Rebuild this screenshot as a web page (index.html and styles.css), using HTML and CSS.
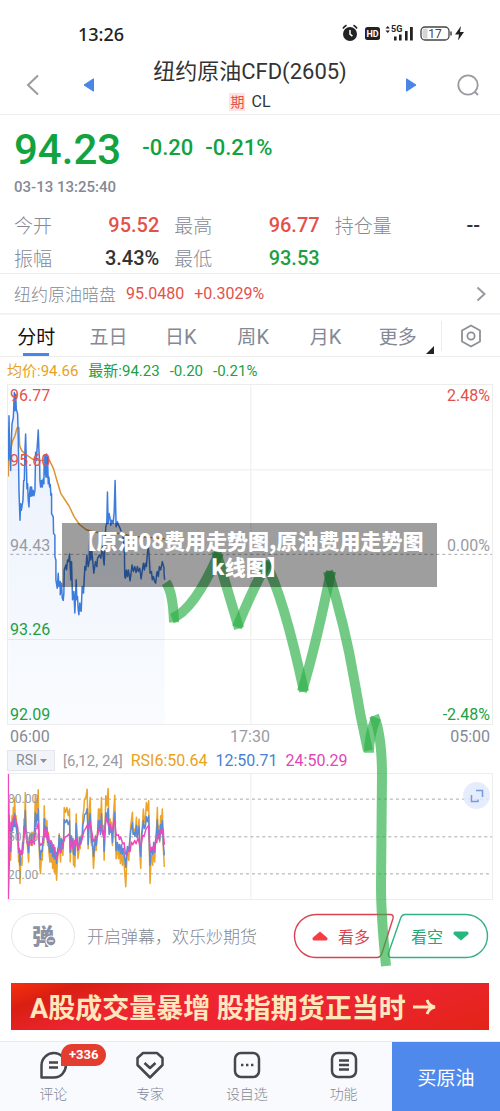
FILE: index.html
```html
<!DOCTYPE html>
<html lang="zh-CN">
<head>
<meta charset="utf-8">
<meta name="viewport" content="width=device-width, initial-scale=1">
<title>纽约原油CFD(2605)</title>
<link rel="stylesheet" href="styles.css">
</head>
<body>
<div class="statusbar">
  <span class="clock">13:26</span>
  <svg class="status-icons" width="124" height="20" viewBox="0 0 124 20" aria-hidden="true">
    <g fill="#222">
      <circle cx="8" cy="11" r="7"/>
      <path d="M1 5.500A9 9 0 0 1 4.500 2.200M15 5.500A9 9 0 0 0 11.500 2.200" fill="none" stroke="#222" stroke-width="1.600"/>
      <path d="M8 7v4.200l2.400 2" fill="none" stroke="#fff" stroke-width="1.500"/>
      <rect x="23" y="4" width="15" height="13" rx="2.500"/>
      <path d="M43.500 5.500l2.200-2.500 2.200 2.500zM43.500 7.500l2.200 2.500 2.200-2.500z"/>
      <rect x="52" y="13.500" width="2.600" height="4"/><rect x="57" y="11.500" width="2.600" height="6"/>
      <rect x="63" y="8" width="2.600" height="9.500"/><rect x="68" y="4" width="2.800" height="13.500"/>
      <path d="M119 3l-6 8.500h4l-1 6 6-8.500h-4z"/>
    </g>
    <text x="30.500" y="14" class="hd">HD</text>
    <text x="49" y="9" class="net">5G</text>
    <rect x="79" y="4" width="28" height="13" rx="4" fill="#fff" stroke="#444" stroke-width="1.300"/>
    <path d="M83 5.500h2.500v10H83q-2.500 0-2.500-2.500V8q0-2.500 2.500-2.500z" fill="#d5d5d5"/>
    <path d="M109 8.500v4" stroke="#444" stroke-width="1.500"/>
    <text x="93" y="14.500" class="batt">17</text>
  </svg>
</div>

<header class="topbar">
  <button class="icon-btn wide" aria-label="返回"><svg width="14" height="22" viewBox="0 0 14 22"><path d="M12 1.500L2 11l10 9.500" fill="none" stroke="#999ba1" stroke-width="2"/></svg></button>
  <button class="icon-btn" aria-label="上一个"><svg width="12" height="14" viewBox="0 0 12 14"><path d="M10.500 .8v12.400L1 7z" fill="#4a86e8" stroke="#4a86e8" stroke-linejoin="round"/></svg></button>
  <div class="heading">
    <h1>纽约原油CFD(2605)</h1>
    <p><span class="tag">期</span>CL</p>
  </div>
  <button class="icon-btn" aria-label="下一个"><svg width="12" height="14" viewBox="0 0 12 14"><path d="M1.500 .8v12.400L11 7z" fill="#4a86e8" stroke="#4a86e8" stroke-linejoin="round"/></svg></button>
  <button class="icon-btn wide" aria-label="搜索"><svg width="22" height="22" viewBox="0 0 22 22"><circle cx="11" cy="11" r="9.700" fill="none" stroke="#999ba1" stroke-width="1.800"/><path d="M17.500 17.500l3.500 3.500" stroke="#999ba1" stroke-width="1.800"/></svg></button>
</header>

<section class="quote">
  <div class="price-row"><strong>94.23</strong><span>-0.20</span><span>-0.21%</span></div>
  <time>03-13 13:25:40</time>
  <dl class="stats">
    <div><dt>今开</dt><dd class="up">95.52</dd></div>
    <div><dt>最高</dt><dd class="up">96.77</dd></div>
    <div><dt>持仓量</dt><dd>--</dd></div>
    <div><dt>振幅</dt><dd>3.43%</dd></div>
    <div><dt>最低</dt><dd class="down">93.53</dd></div>
  </dl>
</section>

<a class="dark-pool" href="#dark">
  <span class="name">纽约原油暗盘</span><span>95.0480</span><span>+0.3029%</span>
  <svg width="10" height="16" viewBox="0 0 10 16"><path d="M1.500 1.500L8.500 8l-7 6.500" fill="none" stroke="#999ba1" stroke-width="2"/></svg>
</a>

<nav class="tabs">
  <button class="active">分时</button><button>五日</button><button>日<span>K</span></button><button>周<span>K</span></button><button>月<span>K</span></button><button class="more">更多</button>
  <button class="settings" aria-label="设置"><svg width="22" height="24" viewBox="0 0 22 24"><path d="M11 1.500l9 5v11l-9 5-9-5v-11z" fill="none" stroke="#8d9098" stroke-width="1.800" stroke-linejoin="round"/><circle cx="11" cy="12" r="3.600" fill="none" stroke="#8d9098" stroke-width="1.800"/></svg></button>
</nav>

<main class="board">
  <div class="legend"><span class="avg">均价:94.66</span><span>最新:94.23</span><span>-0.20</span><span>-0.21%</span></div>

  <div class="chart price-chart">
    <svg viewBox="21 12 1455 1023" preserveAspectRatio="none" aria-hidden="true">
      <defs><linearGradient id="area" x1="0" y1="0" x2="0" y2="1"><stop offset="0" stop-color="#4a86e8" stop-opacity=".12"/><stop offset="1" stop-color="#4a86e8" stop-opacity=".03"/></linearGradient></defs>
      <path class="grid-line" d="M21 268H1476M21 780H1476M751 12V1035"/>
      <path class="dash-line" d="M28 523H1476"/>
      <path fill="url(#area)" d="M22 240L29 200 40 60 50 100 57 420 74 260 84 380 104 300 112 148 117 300 137 230 150 340 162 490 169 625 187 662 206 522 222 700 234 705 244 620 258 525 267 460 279 580 305 500 322 430 343 380 362 455 374 595 402 575 421 597 443 500 465 610 485 545 492 600V1035H22z"/>
      <polyline class="line average" points="22,288 22,240 35,180 42,165 48,142 54,140 56,195 62,210 75,222 95,236 120,240 145,238 158,265 168,300 180,340 205,378 220,410 236,433 255,448 275,455 300,458 360,460 400,470 420,470 492,476"/>
      <polyline class="line price" points="22,240 24,105 26,210 29,270 31,180 33,130 37,110 40,35 42,90 44,40 46,85 50,100 52,180 54,330 57,420 59,370 61,390 66,360 68,300 70,300 72,210 74,160 76,240 78,325 80,310 82,360 84,380 86,340 88,320 90,348 92,320 94,346 97,330 99,346 102,330 104,215 106,240 108,210 110,180 112,148 114,210 116,240 117,300 119,320 122,300 124,320 127,295 129,310 130,225 132,280 133,222 135,290 137,220 139,290 140,230 142,310 144,290 146,320 148,312 150,345 152,340 152,400 157,410 158,460 162,465 162,530 165,540 165,600 169,625 172,580 174,620 178,605 178,645 182,610 184,655 187,662 189,640 190,570 195,555 197,570 200,540 203,545 206,522 210,600 212,545 215,660 219,635 222,700 226,600 228,660 230,650 232,690 234,705 237,670 238,690 241,695 244,620 248,640 250,600 252,560 255,570 258,525 262,560 265,545 267,460 270,540 272,500 275,535 279,580 284,545 288,560 290,535 296,525 300,535 305,500 308,540 310,555 313,480 315,440 318,430 320,335 322,430 325,400 328,415 330,435 333,420 337,430 340,400 343,300 346,440 350,425 353,435 356,440 362,455 367,470 371,520 372,590 374,595 377,570 380,590 383,570 388,603 394,555 398,575 402,560 406,578 410,560 413,575 417,565 421,597 425,570 428,550 431,570 434,550 437,560 440,520 443,500 446,540 448,580 452,575 455,600 458,590 462,605 465,610 468,580 470,575 473,590 476,560 480,570 485,545 490,565 490,580 492,600"/>
    </svg>
    <div class="labels left">
      <div class="pair up"><span>96.77</span><span>95.60</span></div><span class="flat">94.43</span><span class="down">93.26</span><span class="down">92.09</span>
    </div>
    <div class="labels right">
      <div class="pair up"><span>2.48%</span></div><span class="flat">0.00%</span><span></span><span class="down">-2.48%</span>
    </div>
  </div>
  <div class="times"><span>06:00</span><span class="mid">17:30</span><span>05:00</span></div>

  <div class="indicator">
    <label class="picker"><select aria-label="指标"><option>RSI</option></select><svg width="7" height="4" viewBox="0 0 7 4"><path d="M0 0h7L3.500 4z" fill="#8d9098"/></svg></label>
    <span class="params">[6,12, 24]</span><span class="rsi6">RSI6:50.64</span><span class="rsi12">12:50.71</span><span class="rsi24">24:50.29</span>
  </div>

  <div class="chart rsi-chart">
    <svg viewBox="21 24 1455 378" preserveAspectRatio="none" aria-hidden="true">
      <defs>
        <polyline class="trace" id="rsi-trace" points="24,100 26,200 29,285 33,150 35,180 37,125 39,160 41,95 43,160 45,150 48,200 50,190 53,290 55,270 57,355 59,300 61,280 63,300 65,240 67,250 69,160 71,180 73,80 75,190 77,200 80,250 83,290 85,220 87,205 90,240 92,200 94,240 96,200 98,230 100,225 103,90 105,160 107,100 109,130 112,72 113,160 115,250 117,310 119,325 121,280 124,285 126,220 128,240 130,120 132,210 134,160 136,210 138,165 140,240 142,200 144,260 147,290 149,240 151,290 153,240 155,310 157,260 160,320 162,265 163,325 165,290 167,345 169,300 171,270 173,260 175,205 177,260 179,290 181,220 184,230 186,270 188,230 190,125 194,140 198,125 202,150 206,130 208,290 211,210 214,260 216,220 218,300 220,240 222,305 224,240 226,145 228,200 231,280 234,260 236,215 238,250 241,210 244,220 246,150 249,130 251,100 255,95 259,70 262,250 265,140 268,95 272,240 274,220 278,310 281,260 284,210 286,255 290,200 293,130 295,180 297,130 299,200 302,95 304,180 306,200 308,180 310,285 313,170 315,90 318,120 322,68 325,200 328,160 330,190 332,170 335,240 338,150 342,88 344,200 346,280 350,240 353,280 356,250 359,295 362,250 365,300 368,270 371,310 375,365 378,290 380,260 384,285 386,250 390,180 395,140 397,200 400,190 403,210 407,155 409,215 412,190 415,160 417,260 420,310 423,200 425,180 428,130 431,170 434,160 437,110 440,135 444,105 446,260 448,355 451,280 453,270 456,300 459,240 462,290 464,240 467,200 470,125 472,220 474,180 477,230 480,150 482,180 485,130 488,250 491,305"/>
      </defs>
      <path class="grid-line" d="M751 24V402"/>
      <path class="dash-line" d="M105 100H1476M28 214H1476M105 326H1476"/>
      <use href="#rsi-trace" class="fast"/>
      <use href="#rsi-trace" class="medium" transform="matrix(1 0 0 .6 0 87)"/>
      <polyline class="line slow" points="22,24 22,402 26,250 28,235 30,170 34,180 37,160 41,150 45,165 50,185 53,250 57,270 60,255 65,265 68,220 73,185 78,230 82,240 88,225 92,238 95,220 100,236 104,190 108,188 112,172 115,230 119,240 126,230 130,190 132,215 135,190 138,220 142,205 146,235 150,225 154,245 158,238 162,262 168,280 172,260 176,250 180,262 185,235 190,225 192,215 198,212 205,205 209,250 212,225 217,252 220,225 225,240 228,220 232,252 236,235 240,235 246,210 250,195 254,190 260,178 264,188 268,170 273,200 278,228 285,218 290,212 295,190 300,178 304,195 310,220 314,175 318,155 323,180 328,175 332,195 336,185 342,165 345,202 348,210 353,208 356,222 360,215 366,235 370,232 374,265 378,270 382,255 388,258 392,230 396,238 402,225 406,235 412,218 417,238 422,232 426,210 430,212 436,190 444,180 447,235 449,255 454,245 460,258 465,225 468,232 472,205 475,218 480,195 484,205 487,190 489,215 491,238"/>
    </svg>
    <div class="rsi-labels"><span>80.00</span><span>50.00</span><span>20.00</span></div>
    <button class="expand" aria-label="放大"><svg width="14" height="14" viewBox="0 0 14 14" fill="none" stroke="#7799df" stroke-width="1.500"><path d="M6 1.500h6.500v6.500M1.500 6v6.500H8v-2"/></svg></button>
  </div>

  <div class="actions">
    <button class="danmu" aria-label="弹幕"><span>弹</span><svg width="12" height="12" viewBox="0 0 12 12"><circle cx="6" cy="6" r="5" fill="#8c91a3" stroke="#fff" stroke-width="1.200"/><path d="M3.500 6h5" stroke="#fff" stroke-width="1.300"/></svg></button>
    <span class="hint">开启弹幕，欢乐炒期货</span>
    <button class="vote long">
      <svg class="shape" width="102" height="46" viewBox="0 0 102 46"><path d="M23 1.500H97q4 0 3 4L89 40q-1.500 4.500-5 4.500H23A21.500 21.500 0 0 1 23 1.500z" fill="#fff" stroke="#d94250" stroke-width="1.400"/></svg>
      <svg class="mark" width="16" height="10" viewBox="0 0 16 10"><path d="M8 0.500l7 6q1.500 2.500-1 3H2q-2.500-.500-1-3z" fill="#f63d45"/></svg><span>看多</span>
    </button>
    <button class="vote short">
      <svg class="shape" width="102" height="46" viewBox="0 0 102 46"><path d="M79 1.500H18q-3 0-4.500 4L1.500 40q-1 4.500 3 4.500H79A21.500 21.500 0 0 0 79 1.500z" fill="#fff" stroke="#35b184" stroke-width="1.400"/></svg>
      <span>看空</span><svg class="mark" width="16" height="10" viewBox="0 0 16 10"><path d="M8 9.500l7-6q1.500-2.500-1-3H2q-2.500.500-1 3z" fill="#24b87f"/></svg>
    </button>
  </div>

  <svg class="brush" viewBox="0 357 500 613" preserveAspectRatio="none" aria-hidden="true">
    <path d="M166 582Q173 592 174 622"/>
    <path d="M172 618Q194 610 219 553"/>
    <path d="M216 551L239 628"/>
    <path d="M237 627Q252 590 268 561"/>
    <path d="M265 561Q284 597 304 691"/>
    <path d="M302 691Q316 645 331 571"/>
    <path d="M328 571Q345 625 354 678Q360 715 368 750"/>
    <path d="M369 752Q369 735 376 717"/>
    <path d="M374 715Q382 735 382 775L381 885Q381 915 386 965"/>
  </svg>
  <div class="caption"><p>【原油08费用走势图,原油费用走势图k线图】</p></div>
</main>

<a class="banner" href="#promo"><span>A股成交量暴增 股指期货正当时</span><svg width="25" height="18" viewBox="0 0 25 18"><path d="M1 9h21M15 2q2 6 8 7-6 1-8 7" fill="none" stroke="#ffe7bd" stroke-width="2.800"/></svg></a>

<nav class="bottom">
  <a href="#comments">
    <svg width="28" height="30" viewBox="0 0 28 30" fill="none" stroke="#45474d" stroke-width="2.500"><path d="M2.500 27.500V15A12.200 12.200 0 1 1 15 27.500z" stroke-linejoin="round"/><path d="M10 12.500h9M10 17.500h9"/></svg>
    <span>评论</span><b class="badge">+336</b></a>
  <a href="#experts">
    <svg width="30" height="30" viewBox="0 0 30 30" fill="none" stroke="#45474d" stroke-width="2.500" stroke-linejoin="round"><path d="M8 3h14l5.500 5v7L15 27.500 2.500 15V8z"/><path d="M9.500 13l5.500 5 5.500-5"/></svg>
    <span>专家</span></a>
  <a href="#watch">
    <svg width="30" height="30" viewBox="0 0 30 30" fill="none" stroke="#45474d" stroke-width="2.500"><rect x="3" y="3" width="24" height="24" rx="6"/><path d="M9 15h2.400M14 15h2.400M19 15h2.400"/></svg>
    <span>设自选</span></a>
  <a href="#tools">
    <svg width="30" height="30" viewBox="0 0 30 30" fill="none" stroke="#45474d" stroke-width="2.500"><rect x="3" y="3" width="24" height="24" rx="6"/><path d="M10 10.500h10M10 15h10M10 19.500h10"/></svg>
    <span>功能</span></a>
  <button class="buy">买原油</button>
</nav>
</body>
</html>
```
FILE: styles.css
```css
* { box-sizing: border-box; }
body {
  margin: 0;
  background: #fff;
  color: #333;
  font-family: Roboto, "Noto Sans CJK SC", sans-serif;
  font-size: 16px;
}
button, select { font: inherit; color: inherit; background: none; border: 0; padding: 0; margin: 0; }
a { color: inherit; text-decoration: none; }
h1, p, dl, dd { margin: 0; }
svg { display: block; flex: none; }
.up { color: #e4514b; }
.down { color: #1c9f45; }
.flat { color: #999ba1; }

.statusbar { display: flex; justify-content: space-between; align-items: flex-end; height: 46px; padding: 0 34px 0 78px; }
.clock { font: 500 18px/24px "Noto Sans", sans-serif; color: #222; }
.status-icons { margin-bottom: 3px; }
.hd { font: 700 9px Roboto, sans-serif; fill: #fff; text-anchor: middle; }
.net { font: 700 9px Roboto, sans-serif; fill: #222; }
.batt { font: 12px Roboto, sans-serif; fill: #444; text-anchor: middle; }

.topbar { display: flex; height: 69px; padding-top: 10px; border-bottom: 1px solid #ededed; }
.icon-btn { display: flex; align-items: center; justify-content: center; width: 48px; height: 57px; }
.icon-btn.wide { width: 65px; }
.heading { flex: 1; text-align: center; }
.heading h1 { font-size: 22px; line-height: 32px; font-weight: 400; }
.heading p { display: flex; justify-content: center; align-items: center; gap: 6px; line-height: 28px; }
.tag { width: 16px; background: #fde3e1; color: #e4514b; font-size: 14px; line-height: 18px; }

.quote { padding: 9px 14px 0; height: 159px; border-bottom: 1px solid #ededed; }
.price-row { display: flex; align-items: center; gap: 12px; height: 50px; color: #12a33f; font-weight: 500; }
.price-row strong { font-size: 42px; font-weight: 500; margin-right: 9px; }
.price-row span { font-size: 22px; line-height: 26px; padding-bottom: 3px; }
.quote time { display: block; color: #858994; font-size: 15px; line-height: 26px; font-weight: 500; }
.stats { display: grid; grid-template-columns: 1fr 1fr 1fr; column-gap: 15px; padding-top: 8px; padding-right: 6px; }
.stats div { display: flex; justify-content: space-between; align-items: center; height: 33px; }
.stats dt { font-size: 19px; color: #858994; font-weight: 300; }
.stats dd { font-size: 20px; font-weight: 500; }

.dark-pool { display: flex; align-items: center; gap: 10px; height: 41px; padding: 0 14px; border-bottom: 2px solid #f2f2f2; color: #e4514b; }
.dark-pool .name { color: #858994; font-size: 17px; font-weight: 300; }
.dark-pool svg { margin-left: auto; }

.tabs { display: flex; height: 42px; border-bottom: 1px solid #ededed; font-size: 19px; color: #858994; }
.tabs button { flex: 1; position: relative; }
.tabs button span { font-size: 20px; }
.tabs .active { color: #111; }
.tabs .active::after { content: ""; position: absolute; left: 23px; right: 23px; bottom: 0; height: 3px; background: #4a86e8; }
.tabs .more::after { content: ""; position: absolute; right: 0; bottom: 2px; border: 4px solid; border-color: transparent #222 #222 transparent; }
.tabs .settings { flex: none; display: flex; align-items: center; justify-content: center; width: 59px; height: 30px; margin: 6px 0 0 7px; border-left: 1px solid #ededed; }

.board { position: relative; }
.legend { display: flex; gap: 10px; padding: 0 7px; height: 27px; font-size: 15px; line-height: 28px; color: #1c9f45; }
.avg { color: #e8a21d; }
.chart { position: relative; margin: 0 7px; border: 1px solid #ededed; }
.chart > svg { width: 100%; height: 100%; }
.price-chart { height: 341px; }
.grid-line { fill: none; stroke: #ededed; vector-effect: non-scaling-stroke; }
.dash-line { fill: none; stroke: #aaa; stroke-dasharray: 3 3; vector-effect: non-scaling-stroke; }
.line { fill: none; stroke-width: 1.5; stroke-linejoin: round; vector-effect: non-scaling-stroke; }
.average { stroke: #dc9432; }
.price { stroke: #3d7ddd; }
.labels { position: absolute; top: 0; bottom: 0; display: grid; grid-template-rows: repeat(4, 1fr); align-items: end; line-height: 18px; }
.labels.left { left: 2px; }
.labels.right { right: 2px; text-align: right; }
.pair { align-self: stretch; display: flex; flex-direction: column; justify-content: space-between; padding-top: 2px; }
.times { display: grid; grid-template-columns: 1fr 1fr 1fr; padding: 0 10px; line-height: 23px; color: #858994; }
.times .mid { text-align: center; color: #999ba1; }
.times span:last-child { text-align: right; }

.indicator { display: flex; align-items: center; gap: 8px; height: 25px; padding: 0 7px; font-size: 15px; }
.picker { position: relative; }
.picker select { display: block; width: 48px; height: 21px; padding-left: 8px; appearance: none; background: #f2f4fa; border: 1px solid #e3e6ee; font-size: 14px; line-height: 19px; color: #858994; }
.picker svg { position: absolute; right: 8px; top: 9px; pointer-events: none; }
.params { color: #999ba1; }
.rsi6, .rsi12, .rsi24 { font-size: 16px; }
.rsi6 { color: #e8a21d; }
.rsi12 { color: #4a7fd2; }
.rsi24 { color: #df47b4; }
.rsi-chart { height: 127px; }
.trace { fill: none; stroke-width: 1.5; stroke-linejoin: round; vector-effect: non-scaling-stroke; }
.fast { stroke: #eda42b; }
.medium { stroke: #5a8bd3; }
.slow { stroke: #ec49bd; }
.rsi-labels { position: absolute; top: 17px; left: 0; display: grid; gap: 22px; font-size: 12px; line-height: 16px; color: #999ba1; }
.expand { position: absolute; top: 8px; right: 2px; width: 27px; height: 27px; border-radius: 50%; background: rgba(225, 234, 251, .85); display: flex; align-items: center; justify-content: center; }

.actions { display: flex; align-items: center; height: 71px; padding: 0 11px; }
.danmu { position: relative; display: flex; align-items: center; justify-content: center; width: 64px; height: 45px; border: 1px solid #e3e6ee; border-radius: 23px; color: #8c91a3; font: 900 22px/28px "Noto Sans CJK SC", sans-serif; padding-bottom: 4px; }
.danmu svg { position: absolute; right: 17px; bottom: 10px; }
.hint { flex: 1; margin-left: 12px; font-size: 17px; font-weight: 300; color: #858994; white-space: nowrap; }
.vote { position: relative; display: flex; align-items: center; justify-content: center; gap: 10px; width: 102px; height: 46px; font-size: 16px; }
.vote .shape { position: absolute; inset: 0; }
.vote span, .vote .mark { position: relative; }
.long { color: #d94250; padding-right: 6px; }
.short { color: #24a878; margin-left: -8px; padding-left: 4px; }

.brush { position: absolute; inset: 0; width: 100%; height: 100%; pointer-events: none; fill: none; stroke: #2fb14a; stroke-opacity: .68; stroke-width: 10; }
.caption { position: absolute; top: 166px; left: 62px; right: 63px; padding: 4px 10px 8px; background: rgba(0, 0, 0, .38); color: #fff; text-align: center; font: 900 21px/26px "Noto Sans CJK SC", sans-serif; }

.banner { display: flex; align-items: center; gap: 6px; height: 47px; margin: 12px 11px 11px; padding-left: 19px; background: linear-gradient(160deg, #f8300f 0, #d91f12 12%, #ee2430 30%, #ee2433 60%, #e32418 100%); color: #ffe7bd; font-size: 27px; font-weight: 700; white-space: nowrap; }

.bottom { display: flex; height: 70px; padding-left: 5px; background: #f8fafe; border-top: 1px solid #e6e9ee; }
.bottom a { position: relative; flex: 1; display: flex; flex-direction: column; align-items: center; padding-top: 8px; font-size: 14px; line-height: 28px; font-weight: 300; color: #858994; }
.badge { position: absolute; top: 2px; left: 56px; padding: 0 8px; border-radius: 11px 11px 11px 0; background: #e53c30; color: #fff; font-size: 13px; line-height: 22px; font-weight: 700; }
.buy { width: 108px; background: #5089ec; color: #fff; font-size: 19px; }
```
